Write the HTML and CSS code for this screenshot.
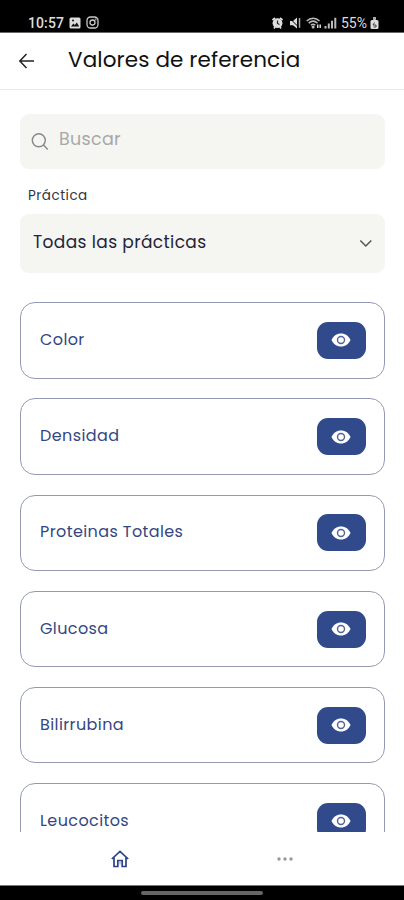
FILE: index.html
```html
<!DOCTYPE html>
<html lang="es">
<head>
<meta charset="utf-8">
<meta name="viewport" content="width=device-width, initial-scale=1">
<title>Valores de referencia</title>
<link rel="stylesheet" href="styles.css">
</head>
<body>
<svg class="defs" aria-hidden="true">
  <symbol id="eye" viewBox="0 0 20 14">
    <path d="M10 .5C5.700.5 2 3.200.5 7 2 10.800 5.700 13.500 10 13.500s8-2.700 9.500-6.500C18 3.200 14.300.5 10 .5Z" fill="#fff"/>
    <circle cx="10" cy="7" r="3.500" fill="#fff" stroke="#536397" stroke-width="1.400"/>
  </symbol>
</svg>
<div class="phone">
  <div class="status">
    <span class="clock">10:57</span>
    <svg class="picture" width="12" height="12" viewBox="0 0 12 12"><rect x=".5" y=".5" width="11" height="11" rx="1.500" fill="#ddd"/><path d="m2 9.500 2.300-3 1.500 1.600 2-2.600 2.400 4Z" fill="#111"/><circle cx="4" cy="3.500" r="1" fill="#111"/></svg>
    <svg class="insta" width="13" height="13" viewBox="0 0 13 13" fill="none" stroke="#c8c8c8" stroke-width="1.300"><rect x="1" y="1" width="11" height="11" rx="3.500"/><circle cx="6.500" cy="6.500" r="2.500"/><circle cx="9.600" cy="3.400" r=".3"/></svg>
    <svg class="alarm" width="11" height="12" viewBox="0 0 11 12"><path d="m.5 3 2.500-2M10.500 3 8 1M2 11.500l1-1.500M9 11.500 8 10" stroke="#ddd" stroke-width="1.700"/><circle cx="5.500" cy="6.200" r="4.900" fill="#ddd"/><path d="M5.500 3.500v3l2 1" fill="none" stroke="#222" stroke-width="1.200"/></svg>
    <svg class="mute" width="12" height="12" viewBox="0 0 12 12"><path d="M1 4h3l4-3.500v11L4 8.200H1Z" fill="#ddd"/><path d="M10.500 1v10" stroke="#aaa" stroke-width="1.500"/><path d="m0 .5 10 10" stroke="#000" stroke-width="1"/></svg>
    <svg class="wifi" width="16" height="12" viewBox="0 0 16 12" fill="none" stroke="#bbb" stroke-width="1.500"><path d="M.7 4C4.500.2 9.800.2 13.500 4M2.700 6.100c2.700-2.500 6-2.500 8.800 0M4.900 8.200c1.500-1.300 3-1.300 4.400 0"/><circle cx="7.100" cy="10" r=".8" fill="#ddd"/><path d="M11.700 7.500v3.500M14.200 7.500v3.500" stroke="#ddd"/></svg>
    <svg class="signal" width="13" height="12" viewBox="0 0 13 12" fill="#bbb"><path d="M.5 9h2v2.500h-2zM3.800 6.500h2v5h-2zM7 3.800h2v7.700H7zM10.300.8h2v10.700h-2z"/></svg>
    <span class="percent">55%</span>
    <svg class="battery" width="9" height="12" viewBox="0 0 9 12"><path d="M3 0h3v3H3z" fill="#aaa"/><rect x=".5" y="3" width="8" height="9" rx="1.500" fill="#ddd"/><path d="M4.500 5.500 3 8h3v2H3.500" stroke="#444" fill="none"/></svg>
  </div>
  <header class="header">
    <svg class="back" width="18" height="18" viewBox="0 0 18 18" fill="none" stroke="#222" stroke-width="1.500"><path d="M16 9H2M8.500 2 1.800 9l6.700 7"/></svg>
    <h1 class="title">Valores de referencia</h1>
  </header>
  <main class="content">
    <div class="search">
      <svg width="18" height="18" viewBox="0 0 18 18" fill="none" stroke="#888" stroke-width="1.400"><circle cx="7.800" cy="7.300" r="6.500"/><path d="m12.500 12 4.300 4.400"/></svg>
      <span class="placeholder">Buscar</span>
    </div>
    <div class="label">Práctica</div>
    <div class="select">
      <span class="selected">Todas las prácticas</span>
      <svg width="14" height="9" viewBox="0 0 14 9" fill="none" stroke="#555" stroke-width="1.500"><path d="m1.300 1.500 5.500 5.500 5.500-5.500"/></svg>
    </div>
    <div class="list">
      <div class="card"><span class="name">Color</span><span class="view"><svg class="eye"><use href="#eye"/></svg></span></div>
      <div class="card"><span class="name">Densidad</span><span class="view"><svg class="eye"><use href="#eye"/></svg></span></div>
      <div class="card"><span class="name">Proteinas Totales</span><span class="view"><svg class="eye"><use href="#eye"/></svg></span></div>
      <div class="card"><span class="name">Glucosa</span><span class="view"><svg class="eye"><use href="#eye"/></svg></span></div>
      <div class="card"><span class="name">Bilirrubina</span><span class="view"><svg class="eye"><use href="#eye"/></svg></span></div>
      <div class="card"><span class="name">Leucocitos</span><span class="view"><svg class="eye"><use href="#eye"/></svg></span></div>
    </div>
  </main>
  <nav class="tabs">
    <svg class="home" width="18" height="18" viewBox="0 0 18 18" fill="none" stroke="#2b4286" stroke-width="1.700"><path d="M.8 9 9 1.400 17.200 9M3 7.500v9h3.800v-6h4.400v6H15v-9"/><path d="M9 10.500v4" stroke="#8b98bb" stroke-width="1"/></svg>
    <svg class="more" width="16" height="4" viewBox="0 0 16 4" fill="#999"><circle cx="2" cy="2" r="1.700"/><circle cx="8" cy="2" r="1.700"/><circle cx="14" cy="2" r="1.700"/></svg>
  </nav>
  <div class="gesture"><span class="handle"></span></div>
</div>
</body>
</html>
```
FILE: styles.css
```css
* { box-sizing: border-box; }
body { margin: 0; background: #fff; font-family: Poppins, Inter, sans-serif; }
svg { display: block; flex: none; }
span, h1, .label { white-space: nowrap; }
.defs { display: none; }
.phone { width: 404px; height: 900px; display: flex; flex-direction: column; overflow: hidden; }
.status { height: 33px; flex: none; background: #000; border-bottom: 1px solid #666; display: flex; align-items: center; padding: 13px 25px 0 28px; color: #ddd; font: 500 14px/18px Roboto, sans-serif; }
.clock { width: 41px; letter-spacing: .1px; }
.insta { margin-left: 5px; }
.alarm { margin-left: auto; }
.mute { margin-left: 6px; }
.wifi { margin-left: 5px; }
.signal { margin-left: 2px; }
.percent { margin-left: 4px; width: 28px; font-weight: 400; }
.battery { margin-left: 1px; }
.header { height: 57px; flex: none; display: flex; align-items: center; padding-left: 18px; border-bottom: 1px solid #e9e9e9; }
.title { margin: 0 0 3px 32px; font-size: 21.5px; line-height: 30px; font-weight: 400; color: #111; letter-spacing: .12px; }
.content { flex: 1; min-height: 0; overflow: hidden; padding: 24px 19px 0 20px; }
.search, .select { background: #f5f5f2; border-radius: 9px; display: flex; align-items: center; }
.search { height: 55px; padding-left: 11px; }
.placeholder { margin: 0 0 5px 10px; font-size: 17.5px; color: #a8a8a8; letter-spacing: .3px; }
.label { margin: 17px 0 8px 8px; font-size: 13.5px; line-height: 20px; color: #343344; letter-spacing: .5px; }
.select { height: 59px; padding: 0 12px 0 13px; justify-content: space-between; }
.selected { margin-bottom: 3px; font-size: 17px; color: #24243a; letter-spacing: .38px; }
.list { margin-top: 29.200px; display: grid; gap: 19.700px; }
.card { height: 76.500px; border: 1px solid #9499b1; border-radius: 15px; display: flex; align-items: center; justify-content: space-between; padding: 0 18px 0 19px; }
.name { margin-bottom: 2px; font-size: 16px; color: #35477f; letter-spacing: .4px; }
.view { width: 49px; height: 37px; border-radius: 11px; background: #304a8c; display: flex; align-items: center; justify-content: center; }
.eye { width: 20px; height: 14px; margin-right: 2px; }
.tabs { height: 53px; flex: none; display: flex; align-items: center; padding-left: 111px; background: #fff; }
.more { margin-left: 148px; }
.gesture { height: 15px; flex: none; background: #000; border-top: 1px solid #777; display: flex; justify-content: center; padding-top: 5px; }
.handle { width: 122px; height: 4px; border-radius: 2px; background: #666; }
```
